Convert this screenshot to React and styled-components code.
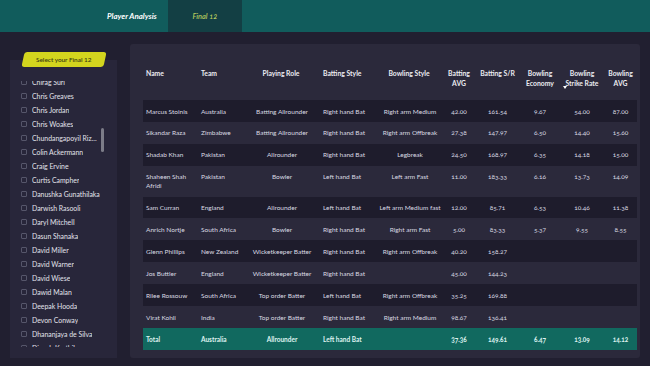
import React from "react";
import styled, { createGlobalStyle } from "styled-components";

const GlobalStyle = createGlobalStyle`
  html, body { margin: 0; padding: 0; background: #211f30; }
  body {
    width: 650px; height: 366px; overflow: hidden;
    font-family: Lato, "Open Sans", "Liberation Sans", sans-serif;
    font-variant-numeric: oldstyle-nums;
    -webkit-font-smoothing: antialiased;
  }
  * { box-sizing: border-box; }
`;

const Page = styled.div`
  width: 650px;
  height: 366px;
  display: flex;
  flex-direction: column;
  background: #211f30;
`;

const Nav = styled.header`
  height: 32px;
  flex: none;
  display: flex;
  align-items: stretch;
  background: #115c5c;
`;

const NavTitle = styled.div`
  display: flex;
  align-items: center;
  padding: 0 11px 0 107px;
  color: #ffffff;
  font-size: 7.9px;
  font-weight: 700;
  font-style: italic;
`;

const NavTab = styled.div`
  width: 74px;
  display: flex;
  align-items: center;
  justify-content: center;
  background: ${(p) => (p.$active ? "#133f44" : "transparent")};
  color: #b3c95e;
  font-size: 7.4px;
  font-style: italic;
  font-weight: 600;
`;

const Main = styled.main`
  flex: 1;
  display: flex;
  gap: 13px;
  padding: 12px 10px 8px 10px;
  min-height: 0;
`;

const Side = styled.aside`
  width: 107px;
  flex: none;
  display: flex;
  flex-direction: column;
  padding-top: 8px;
`;

const SelectButton = styled.button`
  align-self: flex-start;
  margin-left: 13px;
  width: 82px;
  height: 15px;
  border: none;
  border-radius: 3px;
  background: #d3d51e;
  color: #3c3e12;
  font-family: inherit;
  font-size: 6.4px;
  font-weight: 600;
  transform: skewX(-12deg);
  position: relative;
  z-index: 2;
  margin-bottom: -7px;
  padding: 0;
  cursor: pointer;
  & > span { display: inline-block; transform: skewX(12deg); }
`;

const SidePanel = styled.div`
  position: relative;
  flex: 1;
  background: #28263a;
  padding: 21px 0 0 11px;
  overflow: hidden;
`;

const ListViewport = styled.div`
  height: 266px;
  overflow: hidden;
`;

const List = styled.ul`
  list-style: none;
  margin: -6px 0 0 0;
  padding: 0;
`;

const Item = styled.li`
  height: 14px;
  display: flex;
  align-items: center;
  gap: 5px;
  color: #e2e2ea;
  font-size: 6.9px;
`;

const Check = styled.span`
  width: 6px;
  height: 6px;
  flex: none;
  border: 1px solid #56566a;
  border-radius: 1px;
`;

const ItemLabel = styled.span`
  max-width: 68px;
  white-space: nowrap;
  overflow: hidden;
  text-overflow: ellipsis;
`;

const ScrollThumb = styled.div`
  position: absolute;
  left: 91px;
  top: 68px;
  width: 3px;
  height: 24px;
  border-radius: 2px;
  background: #7c7c88;
`;

const Panel = styled.section`
  flex: 1;
  background: #2b293b;
  border-radius: 3px;
  padding: 17px 3px 0 13px;
`;

const COLS = "55px 52px 64px 62px 68px 30px 47px 38px 46px 31px";

const HeadRow = styled.div`
  display: grid;
  grid-template-columns: ${COLS};
  height: 39px;
  padding-top: 7px;
  align-items: start;
`;

const HeadCell = styled.div`
  position: relative;
  padding: 0 3px 0 ${(p) => p.$pl ?? 3}px;
  text-align: ${(p) => p.$align || "center"};
  color: #ececf2;
  font-size: 6.8px;
  font-weight: 700;
  line-height: 10px;
`;

const SortArrow = styled.span`
  position: absolute;
  left: 4px;
  top: 18px;
  width: 0;
  height: 0;
  border-left: 2px solid transparent;
  border-right: 2px solid transparent;
  border-top: 3px solid #ffffff;
`;

const Row = styled.div`
  display: grid;
  grid-template-columns: ${COLS};
  align-items: start;
  background: ${(p) =>
    p.$total ? "#11695f" : p.$dark ? "#1e1c2c" : "transparent"};
`;

const Cell = styled.div`
  padding: 6.6px ${(p) => p.$pr ?? 3}px 6.3px ${(p) => p.$pl ?? 3}px;
  text-align: ${(p) => p.$align || "center"};
  color: ${(p) => (p.$total ? "#dff3f0" : "#dadae2")};
  font-weight: ${(p) => (p.$total ? 700 : 400)};
  font-size: 6.5px;
  line-height: 9px;
`;

const players = [
  "Chirag Suri", "Chris Greaves", "Chris Jordan", "Chris Woakes",
  "Chundangapoyil Rizwan", "Colin Ackermann", "Craig Ervine", "Curtis Campher",
  "Danushka Gunathilaka", "Darwish Rasooli", "Daryl Mitchell", "Dasun Shanaka",
  "David Miller", "David Warner", "David Wiese", "Dawid Malan", "Deepak Hooda",
  "Devon Conway", "Dhananjaya de Silva", "Dinesh Karthik",
];

const columns = [
  { label: "Name", align: "left" },
  { label: "Team", align: "left" },
  { label: "Playing Role", pr: 1, pl: 1 },
  { label: "Batting Style", align: "left", pl: 9 },
  { label: "Bowling Style", pr: 1, pl: 1 },
  { label: ["Batting", "AVG"] },
  { label: "Batting S/R" },
  { label: ["Bowling", "Economy"] },
  { label: ["Bowling", "Strike Rate"], sort: true },
  { label: ["Bowling", "AVG"] },
];

const rows = [
  ["Marcus Stoinis", "Australia", "Batting Allrounder", "Right hand Bat", "Right arm Medium", "42.00", "161.54", "9.67", "54.00", "87.00"],
  ["Sikandar Raza", "Zimbabwe", "Batting Allrounder", "Right hand Bat", "Right arm Offbreak", "27.38", "147.97", "6.50", "14.40", "15.60"],
  ["Shadab Khan", "Pakistan", "Allrounder", "Right hand Bat", "Legbreak", "24.50", "168.97", "6.35", "14.18", "15.00"],
  ["Shaheen Shah Afridi", "Pakistan", "Bowler", "Left hand Bat", "Left arm Fast", "11.00", "183.33", "6.16", "13.73", "14.09"],
  ["Sam Curran", "England", "Allrounder", "Left hand Bat", "Left arm Medium fast", "12.00", "85.71", "6.53", "10.46", "11.38"],
  ["Anrich Nortje", "South Africa", "Bowler", "Right hand Bat", "Right arm Fast", "5.00", "83.33", "5.37", "9.55", "8.55"],
  ["Glenn Phillips", "New Zealand", "Wicketkeeper Batter", "Right hand Bat", "Right arm Offbreak", "40.20", "158.27", "", "", ""],
  ["Jos Buttler", "England", "Wicketkeeper Batter", "Right hand Bat", "", "45.00", "144.23", "", "", ""],
  ["Rilee Rossouw", "South Africa", "Top order Batter", "Left hand Bat", "Right arm Offbreak", "35.25", "169.88", "", "", ""],
  ["Virat Kohli", "India", "Top order Batter", "Right hand Bat", "Right arm Medium", "98.67", "136.41", "", "", ""],
];

const total = ["Total", "Australia", "Allrounder", "Left hand Bat", "", "37.36", "149.61", "6.47", "13.09", "14.12"];

export default function App() {
  return (
    <Page>
      <GlobalStyle />
      <Nav>
        <NavTitle>Player Analysis</NavTitle>
        <NavTab $active>Final 12</NavTab>
      </Nav>
      <Main>
        <Side>
          <SelectButton>
            <span>Select your Final 12</span>
          </SelectButton>
          <SidePanel>
            <ListViewport>
              <List>
                {players.map((p) => (
                  <Item key={p}>
                    <Check />
                    <ItemLabel>{p}</ItemLabel>
                  </Item>
                ))}
              </List>
            </ListViewport>
            <ScrollThumb />
          </SidePanel>
        </Side>
        <Panel>
          <HeadRow>
            {columns.map((c, i) => (
              <HeadCell key={i} $align={c.align} $pl={c.pl}>
                {Array.isArray(c.label) ? (
                  <>
                    {c.label[0]}
                    <br />
                    {c.label[1]}
                  </>
                ) : (
                  c.label
                )}
                {c.sort && <SortArrow />}
              </HeadCell>
            ))}
          </HeadRow>
          {rows.map((r, ri) => (
            <Row key={ri} $dark={ri % 2 === 0}>
              {r.map((v, ci) => (
                <Cell key={ci} $align={columns[ci].align} $pl={columns[ci].pl} $pr={columns[ci].pr}>
                  {v}
                </Cell>
              ))}
            </Row>
          ))}
          <Row $total>
            {total.map((v, ci) => (
              <Cell key={ci} $total $align={columns[ci].align} $pl={columns[ci].pl} $pr={columns[ci].pr}>
                {v}
              </Cell>
            ))}
          </Row>
        </Panel>
      </Main>
    </Page>
  );
}
